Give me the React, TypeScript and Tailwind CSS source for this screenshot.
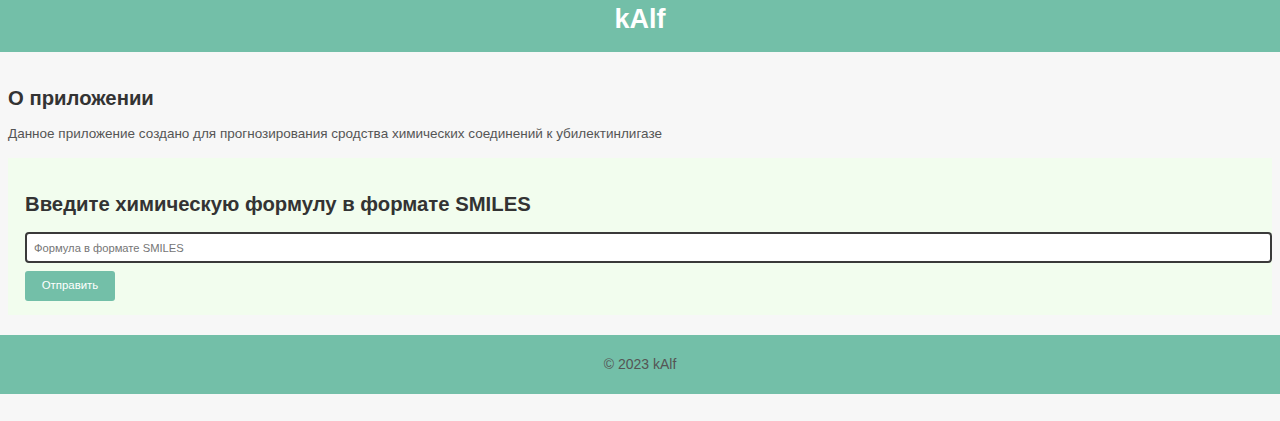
import { useState } from "react";

const App = () => {
  const [smiles, setSmiles] = useState("");

  return (
    <div className="min-h-screen bg-[#f7f7f7] font-['Liberation_Sans',Arial,sans-serif] text-[#333]">
      <header className="h-[52px] bg-[#73bfa8] flex justify-center">
        <h1 className="pt-[4px] text-[27px] leading-[31px] font-bold text-white">kAlf</h1>
      </header>

      <main className="px-2">
        <h2 className="mt-[35px] text-[20.3px] leading-[23px] font-bold text-[#333]">
          О приложении
        </h2>
        <p className="mt-[16px] text-[13.5px] leading-[16px] text-[#555]">
          Данное приложение создано для прогнозирования сродства химических соединений к убилектинлигазе
        </p>

        <section className="mt-[16px] bg-[#f2fdee] pl-[17px] pt-[35px] pb-[14px]">
          <h3 className="text-[20.3px] leading-[23px] font-bold text-[#333]">
            Введите химическую формулу в формате SMILES
          </h3>
          <form
            onSubmit={(e) => e.preventDefault()}
            className="mt-[16px] flex flex-col items-start gap-[8px]"
          >
            <input
              type="text"
              value={smiles}
              onChange={(e) => setSmiles(e.target.value)}
              placeholder="Формула в формате SMILES"
              className="w-full h-[31px] bg-white border-2 border-[#3a3a3a] rounded-[4px] px-[7px] text-[11.2px] text-[#333] placeholder:text-[#757575] outline-none"
            />
            <button
              type="submit"
              className="w-[90px] h-[30px] bg-[#73bfa8] rounded-[3px] text-[11.4px] text-white"
            >
              Отправить
            </button>
          </form>
        </section>
      </main>

      <footer className="mt-[20px] h-[59px] bg-[#73bfa8] flex items-center justify-center">
        <p className="text-[14px] text-[#555]">© 2023 kAlf</p>
      </footer>
    </div>
  );
};

export default App;
